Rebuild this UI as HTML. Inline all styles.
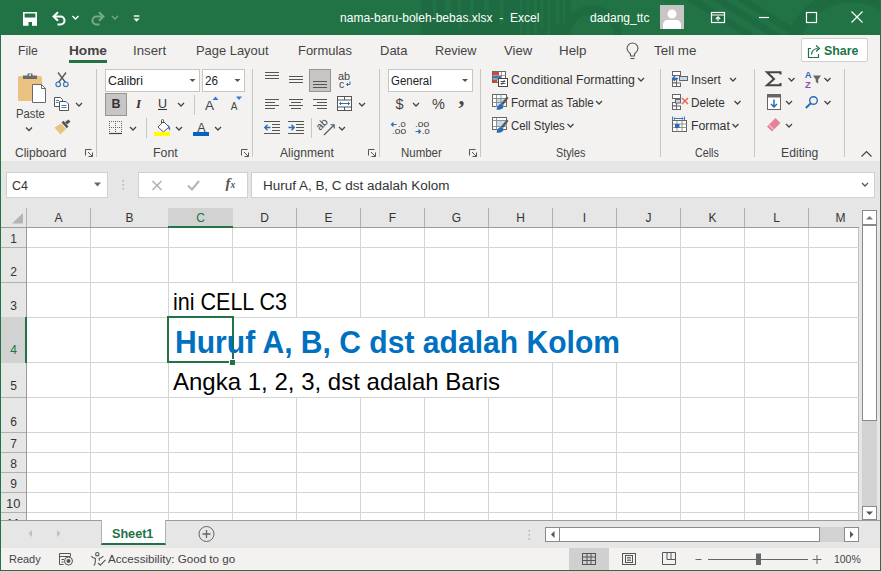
<!DOCTYPE html>
<html lang="id"><head><meta charset="utf-8"><title>nama-baru-boleh-bebas.xlsx - Excel</title>
<style>
html,body{margin:0;padding:0;}
body{width:881px;height:571px;overflow:hidden;position:relative;background:#f3f2f1;font-family:"Liberation Sans",sans-serif;}
div,span,svg{position:absolute;box-sizing:border-box;}
.t{white-space:pre;display:block;}
#texts{left:0;top:0;width:881px;height:571px;}
#title{left:0;top:0;width:881px;height:35px;background:#217346;overflow:hidden;}
#frame{left:0;top:0;width:881px;height:571px;border-left:1px solid #217346;border-right:1px solid #217346;border-bottom:1px solid #217346;z-index:5;pointer-events:none;}
#ribbon{left:1px;top:35px;width:879px;height:126px;background:#f3f2f1;}
.gsep{width:1px;top:69px;height:88px;background:#c8c6c4;}
.box{background:#fff;border:1px solid #c8c6c4;}
#fbar{left:1px;top:161px;width:879px;height:47px;background:#e6e6e6;}
#grid{left:1px;top:208px;width:858px;height:312px;background:#fff;overflow:hidden;}
.vl{width:1px;top:0;height:312px;background:#d4d4d4;}
.hl{height:1px;left:0;width:859px;background:#d4d4d4;}
#colhdr{left:0;top:0;width:859px;height:20px;background:#e6e6e6;border-bottom:1px solid #9b9b9b;}
#rowhdr{left:0;top:20px;width:26px;height:292px;background:#e6e6e6;border-right:1px solid #9b9b9b;}
.chl{width:1px;top:0;height:19px;background:#b1b1b1;}
.rhl{height:1px;left:0;width:25px;background:#b1b1b1;}
#sheetbar{left:1px;top:520px;width:879px;height:28px;background:#e6e6e6;border-top:1px solid #9b9b9b;}
#status{left:1px;top:548px;width:879px;height:22px;background:#f3f2f1;}
#vscroll{left:859px;top:208px;width:21px;height:312px;background:#e6e6e6;}
.btn{background:#c8c6c4;border:1px solid #979593;}
#rshadow{left:1px;top:161px;width:879px;height:5px;background:linear-gradient(#d0d0d0,#dedede 40%,#e6e6e6);}
.mk{display:inline-block;position:static;width:0;height:0;}

</style></head><body>
<div id="title">
  <svg width="881" height="35" viewBox="0 0 881 35" style="left:0;top:0">
    <rect x="421" y="0" width="150" height="35" fill="#1e6b41"/>
    <g fill="#217346">
      <rect x="433" y="0" width="3" height="18"/><rect x="445" y="0" width="6" height="12"/><rect x="458" y="0" width="3" height="28"/><rect x="470" y="0" width="4" height="20"/><rect x="484" y="0" width="5" height="10"/><rect x="500" y="0" width="3" height="24"/>
      <rect x="520" y="0" width="2" height="35"/><rect x="527" y="0" width="2" height="35"/><rect x="534" y="0" width="3" height="35"/><rect x="541" y="0" width="2" height="30"/><rect x="548" y="0" width="2" height="35"/><rect x="556" y="0" width="3" height="25"/><rect x="563" y="0" width="2" height="35"/>
    </g>
    <g fill="none" stroke="#1e6b41">
      <circle cx="592" cy="36" r="26" stroke-width="9"/>
      <circle cx="852" cy="58" r="62" stroke-width="13"/>
      <path d="M690 -2 L752 37 M716 -2 L778 37 M740 -2 L802 37" stroke-width="7"/>
    </g>
  </svg>
</div>
<div id="ribbon"></div>
<div id="rshadow"></div>
<div id="fbar"></div>
<div id="grid">
  <div class="vl" style="left:89px"></div>
<div class="vl" style="left:167px"></div>
<div class="vl" style="left:231px"></div>
<div class="vl" style="left:295px"></div>
<div class="vl" style="left:359px"></div>
<div class="vl" style="left:423px"></div>
<div class="vl" style="left:487px"></div>
<div class="vl" style="left:551px"></div>
<div class="vl" style="left:615px"></div>
<div class="vl" style="left:679px"></div>
<div class="vl" style="left:743px"></div>
<div class="vl" style="left:807px"></div>
<div class="vl" style="left:857px;background:#c0c0c0"></div>
<div class="hl" style="top:39px"></div>
<div class="hl" style="top:74px"></div>
<div class="hl" style="top:109px"></div>
<div class="hl" style="top:154px"></div>
<div class="hl" style="top:189px"></div>
<div class="hl" style="top:224px"></div>
<div class="hl" style="top:244px"></div>
<div class="hl" style="top:264px"></div>
<div class="hl" style="top:284px"></div>
<div class="hl" style="top:304px"></div>
<div style="left:231px;top:75px;width:1px;height:34px;background:#fff"></div>
<div style="left:231px;top:110px;width:1px;height:44px;background:#fff"></div>
<div style="left:295px;top:110px;width:1px;height:44px;background:#fff"></div>
<div style="left:359px;top:110px;width:1px;height:44px;background:#fff"></div>
<div style="left:423px;top:110px;width:1px;height:44px;background:#fff"></div>
<div style="left:487px;top:110px;width:1px;height:44px;background:#fff"></div>
<div style="left:551px;top:110px;width:1px;height:44px;background:#fff"></div>
<div style="left:615px;top:110px;width:1px;height:44px;background:#fff"></div>
<div style="left:231px;top:155px;width:1px;height:34px;background:#fff"></div>
<div style="left:295px;top:155px;width:1px;height:34px;background:#fff"></div>
<div style="left:359px;top:155px;width:1px;height:34px;background:#fff"></div>
<div style="left:423px;top:155px;width:1px;height:34px;background:#fff"></div>
<div style="left:487px;top:155px;width:1px;height:34px;background:#fff"></div>
<div id="colhdr"></div>
<div id="chsel" style="left:167px;top:0;width:65px;height:20px;background:#d2d2d2;border-bottom:2px solid #217346"></div>
<div class="chl" style="left:25px"></div>
<div class="chl" style="left:89px"></div>
<div class="chl" style="left:295px"></div>
<div class="chl" style="left:359px"></div>
<div class="chl" style="left:423px"></div>
<div class="chl" style="left:487px"></div>
<div class="chl" style="left:551px"></div>
<div class="chl" style="left:615px"></div>
<div class="chl" style="left:679px"></div>
<div class="chl" style="left:743px"></div>
<div class="chl" style="left:807px"></div>
<div id="rowhdr"></div>
<div id="rhsel" style="left:0;top:109px;width:26px;height:46px;background:#d2d2d2;border-right:2px solid #217346"></div>
<div class="rhl" style="top:39px"></div>
<div class="rhl" style="top:74px"></div>
<div class="rhl" style="top:189px"></div>
<div class="rhl" style="top:224px"></div>
<div class="rhl" style="top:244px"></div>
<div class="rhl" style="top:264px"></div>
<div class="rhl" style="top:284px"></div>
<div class="rhl" style="top:304px"></div>
<div id="sel" style="left:166px;top:108px;width:67px;height:47px;border:2px solid #217346"></div>
<div id="fill" style="left:228px;top:151px;width:5px;height:5px;background:#217346;border-left:1px solid #fff;border-top:1px solid #fff;box-sizing:content-box"></div>
</div>
<div id="vscroll"></div>
<div id="sheetbar"></div>
<div id="sheettab" style="left:101px;top:520px;width:65px;height:25px;background:#fff;border-bottom:2px solid #217346;border-left:1px solid #b0b0b0;border-right:1px solid #b0b0b0"></div>
<div id="hstrack" style="left:820px;top:527px;width:25px;height:15px;background:#d2d2d2"></div>
<div id="status"></div>
<!--BOXES-->
<div class="box" style="left:105px;top:69px;width:95px;height:23px"></div>
<div class="box" style="left:202px;top:69px;width:43px;height:23px"></div>
<div class="box" style="left:388px;top:69px;width:85px;height:23px"></div>
<div class="box" style="left:6px;top:172px;width:102px;height:26px;border-color:#d0d0d0"></div>
<div class="box" style="left:138px;top:172px;width:110px;height:26px;border-color:#d0d0d0"></div>
<div class="box" style="left:251px;top:172px;width:624px;height:26px;border-color:#d0d0d0"></div>
<div class="btn" style="left:105px;top:93px;width:22px;height:23px"></div>
<div class="btn" style="left:309px;top:69px;width:22px;height:23px"></div>
<div class="box" style="left:801px;top:38px;width:67px;height:24px;border-color:#d2d0ce;border-radius:2px"></div>
<div id="hometab" style="left:69px;top:60px;width:38px;height:3px;background:#217346"></div>
<div class="gsep" style="left:96px"></div>
<div class="gsep" style="left:252px"></div>
<div class="gsep" style="left:379px"></div>
<div class="gsep" style="left:480px"></div>
<div class="gsep" style="left:660px"></div>
<div class="gsep" style="left:754px"></div>
<div class="gsep" style="left:844px"></div>
<svg id="icons" width="881" height="571" viewBox="0 0 881 571" style="left:0;top:0" fill="none">
<!-- ===== title bar ===== -->
<g stroke="#fff" fill="none">
  <path d="M23.800 25 V12.700 H36.200 V25" stroke-width="1.600"/>
  <path d="M23 17.500 H37 V25.800 H32 V22 H28.500 V25.800 H23Z" fill="#fff" stroke="none"/>
  <path d="M54 16.500 H60.500 A4 4 0 0 1 60.500 24.500 H57.500" stroke-width="2.100"/>
  <path d="M58 12.200 L53.600 16.500 L58 20.800" stroke-width="2.100"/>
  <path d="M72.500 16 L75.500 19 L78.500 16" stroke-width="1.400"/>
  <g opacity=".38">
  <path d="M103 16.500 H96.500 A4 4 0 0 0 96.500 24.500 H99.500" stroke-width="2.100"/>
  <path d="M99 12.200 L103.400 16.500 L99 20.800" stroke-width="2.100"/>
  <path d="M112 16 L115 19 L118 16" stroke-width="1.400"/>
  </g>
  <path d="M133.800 16 H139.400" stroke-width="1.400"/>
</g>
<path d="M133.500 18.500 H139.700 L136.600 21.700Z" fill="#fff"/>
<!-- avatar -->
<rect x="660" y="5" width="24" height="24" fill="#c8c6c4"/>
<circle cx="672" cy="14" r="4.5" fill="#fff"/>
<path d="M663 29 V25 Q663 20 668 20 H676 Q681 20 681 25 V29Z" fill="#fff"/>
<!-- ribbon display -->
<g stroke="#fff" stroke-width="1.200" fill="none">
<rect x="711.500" y="12.500" width="13" height="10"/>
<path d="M711.500 15 H724.500 M718 21 V17 M715.800 19 L718 16.800 L720.200 19"/>
<path d="M759 17.500 H769"/>
<rect x="806.500" y="12.500" width="10" height="10"/>
<path d="M851.500 11.500 L862.500 22.500 M862.500 11.500 L851.500 22.500"/>
</g>
<!-- ===== tab row ===== -->
<g stroke="#555" stroke-width="1.100" fill="none">
<path d="M630.500 56 V54 C628 52 627 50.500 627 48.500 A5.500 5.500 0 0 1 638 48.500 C638 50.500 637 52 634.500 54 V56 Z"/>
<path d="M630.500 58.500 H634.500"/>
</g>
<g stroke="#217346" stroke-width="1.200" fill="none">
<path d="M811 48.500 H808.500 V57.500 H818.500 V54"/>
<path d="M811.500 54.500 C812 50 815 48.500 818 48.500 M816 45.500 L819.500 48.500 L816 51.500"/>
</g>

<!-- ===== clipboard group ===== -->
<rect x="18" y="76" width="24" height="25" rx="1.500" fill="#eac282"/>
<path d="M23 79 V75.500 H27.500 V73.500 H32.500 V75.500 H37 V79Z" fill="#6a6a6a"/>
<rect x="29" y="74.300" width="2" height="1.500" fill="#f3f2f1"/>
<path d="M32.500 84.500 H41.500 L45.500 88.500 V102.500 H32.500Z" fill="#fff" stroke="#6a6a6a" stroke-width="1"/>
<path d="M41.500 84.500 V88.500 H45.500" stroke="#6a6a6a" stroke-width="1"/>
<path d="M-3 -1.500 L0 1.500 L3 -1.500" stroke="#444" stroke-width="1.300" fill="none" transform="translate(29 129)"/>
<!-- scissors -->
<g stroke="#555" stroke-width="1.300"><path d="M58 72.500 L65.500 82.500 M66 72.500 L58.500 82.500"/></g>
<circle cx="58.200" cy="84.300" r="2.300" stroke="#3a78c0" stroke-width="1.200"/>
<circle cx="65.800" cy="84.300" r="2.300" stroke="#3a78c0" stroke-width="1.200"/>
<!-- copy -->
<g stroke="#555" stroke-width="1" fill="#fff">
<path d="M54.500 97.500 H60.500 L62.500 99.500 V106.500 H54.500Z"/>
<path d="M59.500 101.500 H66 L68.500 104 V110.500 H59.500Z"/>
</g>
<path d="M56 100.500 H59 M56 102.500 H58.500 M61.500 105.500 H66.500 M61.500 107.500 H66.500" stroke="#3a78c0" stroke-width="1"/>
<path d="M-3 -1.500 L0 1.500 L3 -1.500" stroke="#444" stroke-width="1.300" fill="none" transform="translate(79 104.500)"/>
<!-- format painter -->
<path d="M54.500 127.500 L61 123.500 L66 129 L60.500 134.500Z" fill="#eac282"/>
<path d="M61.500 122.500 L63.500 120.800 L68.500 126.500 L66.700 128.200Z" fill="#555"/>
<path d="M65 122 L68.500 119.500 L70.500 121.800 L67 124.500Z" fill="#555"/>
<path d="M0.500 6.500 V0.500 H6.500 M3 3 L7.500 7.500 M7.500 3.500 V7.500 H3.500" stroke="#555" stroke-width="1" fill="none" transform="translate(85 149)"/>
<!-- ===== font group ===== -->
<path d="M-3 -1.500 H3 L0 1.500Z" fill="#555" transform="translate(192.500 80.500)"/>
<path d="M-3 -1.500 H3 L0 1.500Z" fill="#555" transform="translate(237.500 80.500)"/>
<path d="M-3 -1.500 L0 1.500 L3 -1.500" stroke="#444" stroke-width="1.300" fill="none" transform="translate(181 104.500)"/>
<path d="M194.500 95 V115 M146.500 118 V138" stroke="#c8c6c4"/>
<path d="M212.500 100 L215.500 96.500 L218.500 100Z" fill="#2b7cd3"/>
<path d="M236 96.500 H242 L239 100Z" fill="#2b7cd3"/>
<!-- borders -->
<g stroke="#666" stroke-width="1" stroke-dasharray="1 1">
<path d="M109 121.500 H122 M109 127.500 H122 M109.500 121 V133 M115.500 121 V133 M121.500 121 V133"/>
</g>
<path d="M109 133.500 H122" stroke="#444" stroke-width="1.200"/>
<path d="M-3 -1.500 L0 1.500 L3 -1.500" stroke="#444" stroke-width="1.300" fill="none" transform="translate(133 128.500)"/>
<!-- fill colour -->
<path d="M158 127 L163.500 121.500 L169 127 L163.500 132 Z" fill="#fff" stroke="#555" stroke-width="1"/>
<path d="M161.500 124 V120.500 Q161.500 119.500 162.500 119.500 Q163.500 119.500 163.500 120.500 V123" stroke="#555" stroke-width="1"/>
<path d="M168 125 Q171 126.500 170 130.500 Q167.500 129 168 125Z" fill="#3a78c0"/>
<rect x="154" y="132" width="16" height="4" fill="#ffff00"/>
<path d="M-3 -1.500 L0 1.500 L3 -1.500" stroke="#444" stroke-width="1.300" fill="none" transform="translate(179 128.500)"/>
<rect x="193" y="132" width="16" height="4" fill="#0563c1"/>
<path d="M-3 -1.500 L0 1.500 L3 -1.500" stroke="#444" stroke-width="1.300" fill="none" transform="translate(218 128.500)"/>
<path d="M0.500 6.500 V0.500 H6.500 M3 3 L7.500 7.500 M7.500 3.500 V7.500 H3.500" stroke="#555" stroke-width="1" fill="none" transform="translate(241 149)"/>
<!-- ===== alignment ===== -->
<g stroke="#555" stroke-width="1.100">
<path d="M265 72.500 H279 M265 75.500 H279 M265 78.500 H279"/>
<path d="M289 76.500 H303 M289 79.500 H303 M289 82.500 H303"/>
<path d="M313 81.500 H327 M313 84.500 H327 M313 87.500 H327"/>
<path d="M265 99.500 H279 M265 102.500 H275 M265 105.500 H279 M265 108.500 H275"/>
<path d="M289 99.500 H303 M291 102.500 H301 M289 105.500 H303 M291 108.500 H301"/>
<path d="M313 99.500 H327 M317 102.500 H327 M313 105.500 H327 M317 108.500 H327"/>
<path d="M264 121.500 H280 M272 124.500 H280 M272 127.500 H280 M272 130.500 H280 M264 133.500 H280"/>
<path d="M288 121.500 H304 M296 124.500 H304 M296 127.500 H304 M296 130.500 H304 M288 133.500 H304"/>
</g>
<g stroke="#2b6cb5" stroke-width="1.400">
<path d="M265 127.500 H270.500 M267.500 124.800 L264.800 127.500 L267.500 130.200"/>
<path d="M288.500 127.500 H294 M291.500 124.800 L294.200 127.500 L291.500 130.200"/>
</g>
<!-- merge -->
<g stroke="#555" stroke-width="1">
<rect x="337.500" y="96.500" width="14" height="14" fill="#fff"/>
<path d="M337.500 100 H351.500 M337.500 107 H351.500 M344.500 96.500 V100 M344.500 107 V110.500"/>
</g>
<path d="M339.500 103.500 H349.500 M341 102 L339.500 103.500 L341 105 M348 102 L349.500 103.500 L348 105" stroke="#2b6cb5" stroke-width="1"/>
<path d="M-3 -1.500 L0 1.500 L3 -1.500" stroke="#444" stroke-width="1.300" fill="none" transform="translate(362 104.500)"/>
<path d="M311.500 118 V138" stroke="#c8c6c4"/>
<path d="M324 135 L334 125 M330.500 124.800 H334.200 V128.500" stroke="#555" stroke-width="1.100"/>
<path d="M-3 -1.500 L0 1.500 L3 -1.500" stroke="#444" stroke-width="1.300" fill="none" transform="translate(342 128.500)"/>
<path d="M346.500 84.500 H350 V81.500 M348 83 L346.500 84.500 L348 86" stroke="#2b6cb5" stroke-width="1"/>
<path d="M0.500 6.500 V0.500 H6.500 M3 3 L7.500 7.500 M7.500 3.500 V7.500 H3.500" stroke="#555" stroke-width="1" fill="none" transform="translate(368 149)"/>
<!-- ===== number ===== -->
<path d="M-3 -1.500 H3 L0 1.500Z" fill="#555" transform="translate(465 80.500)"/>
<path d="M-3 -1.500 L0 1.500 L3 -1.500" stroke="#444" stroke-width="1.300" fill="none" transform="translate(416 104.500)"/>
<g stroke="#2b6cb5" stroke-width="1.200">
<path d="M391.500 124.500 H396.500 M393.500 122.500 L391.500 124.500 L393.500 126.500"/>
<path d="M415.500 131.500 H420.500 M418.500 129.500 L420.500 131.500 L418.500 133.500"/>
</g>
<path d="M0.500 6.500 V0.500 H6.500 M3 3 L7.500 7.500 M7.500 3.500 V7.500 H3.500" stroke="#555" stroke-width="1" fill="none" transform="translate(469 149)"/>
<!-- ===== styles ===== -->
<g>
<rect x="492.500" y="71.500" width="13" height="11" fill="#fff" stroke="#666"/>
<path d="M497 71.500 V82.500 M501.500 71.500 V82.500 M492.500 75.500 H505.500 M492.500 79 H505.500" stroke="#888" stroke-width=".8"/>
<rect x="493" y="72" width="6" height="3" fill="#d9482b"/>
<rect x="493" y="76" width="8" height="2.500" fill="#3a78c0"/>
<rect x="493" y="79.500" width="4" height="3" fill="#d9482b"/>
<rect x="498.500" y="78.500" width="9" height="8" fill="#fff" stroke="#444"/>
<path d="M500.500 81.500 H505.500 M500.500 83.500 H505.500 M504.500 80 L501.500 85" stroke="#444" stroke-width=".9"/>
</g>
<g id="fat">
<rect x="492.500" y="94.500" width="14" height="12" fill="#fff" stroke="#666"/>
<rect x="496.500" y="98.500" width="8" height="8" fill="#c5d9f1"/>
<path d="M496.500 94.500 V106.500 M501 94.500 V106.500 M492.500 98.500 H506.500 M492.500 102.500 H506.500" stroke="#888" stroke-width=".9"/>
<path d="M501 103.500 L507 96.500 L508.500 98 L503 105Z" fill="#555"/>
<path d="M496.500 109.500 Q497.500 104 501.500 104 Q504.500 105.500 503 108 Q501 110.500 496.500 109.500Z" fill="#2b6cb5"/>
</g>
<g id="cs">
<rect x="492.500" y="117.500" width="14" height="12" fill="#fff" stroke="#666"/>
<rect x="496.500" y="120.500" width="10" height="6" fill="#c5d9f1"/>
<path d="M496.500 117.500 V129.500 M492.500 120.500 H506.500 M492.500 126.500 H506.500" stroke="#888" stroke-width=".9"/>
<path d="M501 126.500 L507 119.500 L508.500 121 L503 128Z" fill="#555"/>
<path d="M496.500 132.500 Q497.500 127 501.500 127 Q504.500 128.500 503 131 Q501 133.500 496.500 132.500Z" fill="#2b6cb5"/>
</g>
<path d="M-3 -1.500 L0 1.500 L3 -1.500" stroke="#444" stroke-width="1.300" fill="none" transform="translate(641 79.500)"/>
<path d="M-3 -1.500 L0 1.500 L3 -1.500" stroke="#444" stroke-width="1.300" fill="none" transform="translate(599 102.500)"/>
<path d="M-3 -1.500 L0 1.500 L3 -1.500" stroke="#444" stroke-width="1.300" fill="none" transform="translate(570.500 125.500)"/>
<!-- ===== cells ===== -->
<g stroke="#666" stroke-width="1" fill="#fff">
<rect x="672.500" y="71.500" width="8" height="4"/>
<rect x="672.500" y="79.500" width="4" height="3.500"/>
<rect x="672.500" y="83" width="4" height="3.500"/><rect x="676.500" y="83" width="4" height="3.500"/>
<rect x="679.500" y="76.500" width="8" height="4" fill="#c5d9f1"/>
<rect x="672.500" y="94.500" width="8" height="4"/>
<rect x="672.500" y="102.500" width="4" height="3.500"/>
<rect x="672.500" y="106" width="4" height="3.500"/><rect x="676.500" y="106" width="4" height="3.500"/>
<rect x="675.500" y="99.500" width="5" height="3.500" fill="#c5d9f1"/>
<rect x="672.500" y="120.500" width="14" height="11"/>
</g>
<path d="M672.500 78.500 H678 M675 76 L672.500 78.500 L675 81" stroke="#2b6cb5" stroke-width="1.400"/>
<path d="M682 98 L688 104 M688 98 L682 104" stroke="#e8604c" stroke-width="1.400"/>
<path d="M672.500 124 H686.500 M672.500 127.500 H686.500 M677 120.500 V131.500 M682 120.500 V131.500" stroke="#888" stroke-width=".9"/>
<rect x="675" y="124" width="4.500" height="4" fill="#2b6cb5"/>
<path d="M672.500 116.500 V120 M684.500 116.500 V120 M674 118.500 H683 M675 117.300 L673.800 118.500 L675 119.700 M682 117.300 L683.200 118.500 L682 119.700" stroke="#2b6cb5" stroke-width=".9"/>
<path d="M-3 -1.500 L0 1.500 L3 -1.500" stroke="#444" stroke-width="1.300" fill="none" transform="translate(733 79.500)"/>
<path d="M-3 -1.500 L0 1.500 L3 -1.500" stroke="#444" stroke-width="1.300" fill="none" transform="translate(737.500 102.500)"/>
<path d="M-3 -1.500 L0 1.500 L3 -1.500" stroke="#444" stroke-width="1.300" fill="none" transform="translate(735.500 125.500)"/>
<!-- ===== editing ===== -->
<path d="M780.500 74.500 V72.200 H767 L774 79 L767 85.300 H780.500 V83" stroke="#444" stroke-width="2" stroke-linejoin="miter"/>
<path d="M-3 -1.500 L0 1.500 L3 -1.500" stroke="#444" stroke-width="1.300" fill="none" transform="translate(791.500 79.500)"/>
<path d="M-3 -1.500 L0 1.500 L3 -1.500" stroke="#444" stroke-width="1.300" fill="none" transform="translate(827.500 79.500)"/>
<path d="M813 75.500 H821 L818.200 79.500 V83.500 L815.800 82 V79.500Z" fill="#666"/>
<rect x="767.500" y="94.500" width="13" height="15" fill="#fff" stroke="#666"/>
<rect x="767" y="94" width="14" height="3.500" fill="#666"/>
<path d="M774 99.500 V106.500 M771 104 L774 107 L777 104" stroke="#2b6cb5" stroke-width="1.500"/>
<path d="M-3 -1.500 L0 1.500 L3 -1.500" stroke="#444" stroke-width="1.300" fill="none" transform="translate(789 102.500)"/>
<circle cx="813.500" cy="100.500" r="3.800" stroke="#2b6cb5" stroke-width="1.400"/>
<path d="M810.800 103.300 L805.800 108" stroke="#2b6cb5" stroke-width="1.900"/>
<path d="M-3 -1.500 L0 1.500 L3 -1.500" stroke="#444" stroke-width="1.300" fill="none" transform="translate(827.500 102.500)"/>
<path d="M767 126.500 L775.500 118 L780.500 123 L772 131.500 Z" fill="#e8829a"/>
<path d="M769 124.800 L773.800 129.600" stroke="#f3f2f1" stroke-width="1"/>
<path d="M-3 -1.500 L0 1.500 L3 -1.500" stroke="#444" stroke-width="1.300" fill="none" transform="translate(789 125.500)"/>
<path d="M861.500 156.500 L866.500 151.500 L871.500 156.500" stroke="#444" stroke-width="1.200"/>

<!-- ===== formula bar ===== -->
<g fill="#b0b0b0"><rect x="122.500" y="180" width="1.500" height="1.500"/><rect x="122.500" y="184" width="1.500" height="1.500"/><rect x="122.500" y="188" width="1.500" height="1.500"/></g>
<path d="M94 182.500 H101 L97.500 186.500Z" fill="#666"/>
<path d="M152.500 181 L161.500 190 M161.500 181 L152.500 190" stroke="#b4b4b4" stroke-width="1.700"/>
<path d="M188 185.500 L192 189.500 L199 181" stroke="#b4b4b4" stroke-width="2"/>
<path d="M862 183 L865 186 L868 183" stroke="#555" stroke-width="1.300"/>
<!-- select-all triangle -->
<path d="M23 213 V223.500 H12Z" fill="#b4b4b4"/>
<!-- ===== vertical scrollbar ===== -->
<rect x="862.500" y="210.500" width="14" height="14" fill="#fff" stroke="#8a8a8a"/>
<path d="M866 219.500 H873 L869.500 216Z" fill="#777"/>
<rect x="862" y="421" width="15" height="86" fill="#d2d2d2"/>
<rect x="862.500" y="225.500" width="14" height="195" fill="#fff" stroke="#8a8a8a"/>
<rect x="862.500" y="506.500" width="14" height="13" fill="#fff" stroke="#8a8a8a"/>
<path d="M866 511.500 H873 L869.500 515Z" fill="#555"/>
<!-- ===== sheet bar ===== -->
<path d="M32 530 V537 L28.500 533.500Z M57 530 V537 L60.500 533.500Z" fill="#c0c0c0"/>
<circle cx="206.500" cy="534" r="7.500" stroke="#666" stroke-width="1" fill="none"/>
<path d="M202.500 534 H210.500 M206.500 530 V538" stroke="#666" stroke-width="1.300"/>
<g fill="#b0b0b0"><rect x="528.500" y="530" width="1.500" height="1.500"/><rect x="528.500" y="534" width="1.500" height="1.500"/><rect x="528.500" y="538" width="1.500" height="1.500"/></g>
<rect x="545.500" y="527.500" width="14" height="14" fill="#fff" stroke="#8a8a8a"/>
<path d="M554.500 531 V538 L551 534.500Z" fill="#555"/>
<rect x="559.500" y="527.500" width="260" height="14" fill="#fff" stroke="#8a8a8a"/>
<rect x="844.500" y="527.500" width="14" height="14" fill="#fff" stroke="#8a8a8a"/>
<path d="M850 531 V538 L853.500 534.500Z" fill="#555"/>
<!-- ===== status bar ===== -->
<g stroke="#555" stroke-width="1" fill="none">
<path d="M70.500 556 V553.500 H59.500 V564.500 H63.500 M59.500 556.500 H70.500 M61.500 559.500 H64 M61.500 562 H63.500"/>
<circle cx="68.500" cy="561" r="4"/>
</g>
<circle cx="68.500" cy="561" r="2" fill="#555"/>
<g stroke="#555" stroke-width="1.100" fill="none">
<circle cx="97.300" cy="554.200" r="1.700"/>
<path d="M91.300 556 C92.500 558 94.300 558.300 95.300 558.300 V562 C95.300 563.500 94.800 564.600 93.800 565.500 M103.300 556 C102 558 100.300 558.300 99.300 558.300 V560.800"/>
<path d="M98.200 563 L100.300 565.200 L105.500 559.800"/>
</g>
<rect x="569" y="548" width="40" height="22" fill="#d0d0d0"/>
<g stroke="#555" stroke-width="1" fill="none">
<rect x="582.500" y="553.500" width="13" height="11"/>
<path d="M582.500 557 H595.500 M582.500 560.500 H595.500 M587 553.500 V564.500 M591 553.500 V564.500"/>
<rect x="622.500" y="553.500" width="13" height="11"/>
<rect x="625.500" y="555.500" width="7" height="7"/>
<path d="M627 557.500 H631 M627 559 H631 M627 560.500 H631" stroke-width=".8"/>
<path d="M662.500 552.500 H675.500 V564.500 H662.500Z M667 552.500 V559.500 H675.500 M671 552.500 V559.500"/>
</g>
<path d="M695.500 559.500 H701.500 M708 559.500 H808 M812.500 559.500 H821.500 M817 555 V564" stroke="#666" stroke-width="1"/>
<rect x="756" y="553.500" width="5" height="11.500" fill="#666"/>
</svg>

<div id="frame"></div>

<div id="texts">
<span class="t" id="t0" style="left:340.48px;top:6.01px;font-size:12px;line-height:24px;height:24px;color:#fff;transform:scaleX(1.0028);transform-origin:0 0;">nama-baru-boleh-bebas.xlsx&nbsp; -&nbsp; Excel</span>
<span class="t" id="t1" style="left:589.75px;top:6.01px;font-size:12.5px;line-height:25.0px;height:25.0px;color:#fff;transform:scaleX(0.9599);transform-origin:0 0;">dadang_ttc</span>
<span class="t" id="t2" style="left:17.59px;top:37.01px;font-size:13.5px;line-height:27.0px;height:27.0px;color:#444;transform:scaleX(0.9042);transform-origin:0 0;">File</span>
<span class="t" id="t3" style="left:68.69px;top:37.01px;font-size:13.5px;line-height:27.0px;height:27.0px;color:#444;font-weight:700;transform:scaleX(1.0124);transform-origin:0 0;">Home</span>
<span class="t" id="t4" style="left:133.39px;top:37.01px;font-size:13.5px;line-height:27.0px;height:27.0px;color:#444;transform:scaleX(0.9800);transform-origin:0 0;">Insert</span>
<span class="t" id="t5" style="left:196.29px;top:37.01px;font-size:13.5px;line-height:27.0px;height:27.0px;color:#444;transform:scaleX(0.9560);transform-origin:0 0;">Page Layout</span>
<span class="t" id="t6" style="left:297.69px;top:37.01px;font-size:13.5px;line-height:27.0px;height:27.0px;color:#444;transform:scaleX(0.9594);transform-origin:0 0;">Formulas</span>
<span class="t" id="t7" style="left:379.59px;top:37.01px;font-size:13.5px;line-height:27.0px;height:27.0px;color:#444;transform:scaleX(0.9632);transform-origin:0 0;">Data</span>
<span class="t" id="t8" style="left:435.49px;top:37.01px;font-size:13.5px;line-height:27.0px;height:27.0px;color:#444;transform:scaleX(0.9371);transform-origin:0 0;">Review</span>
<span class="t" id="t9" style="left:503.59px;top:37.01px;font-size:13.5px;line-height:27.0px;height:27.0px;color:#444;transform:scaleX(0.9707);transform-origin:0 0;">View</span>
<span class="t" id="t10" style="left:558.69px;top:37.01px;font-size:13.5px;line-height:27.0px;height:27.0px;color:#444;transform:scaleX(0.9897);transform-origin:0 0;">Help</span>
<span class="t" id="t11" style="left:653.79px;top:37.01px;font-size:13.5px;line-height:27.0px;height:27.0px;color:#444;transform:scaleX(0.9933);transform-origin:0 0;">Tell me</span>
<span class="t" id="t12" style="left:823.69px;top:37.01px;font-size:13.5px;line-height:27.0px;height:27.0px;color:#217346;font-weight:700;transform:scaleX(0.9187);transform-origin:0 0;">Share</span>
<span class="t" id="t13" style="left:15.58px;top:102.01px;font-size:12px;line-height:24px;height:24px;color:#444;transform:scaleX(0.9391);transform-origin:0 0;">Paste</span>
<span class="t" id="t14" style="left:14.58px;top:141.01px;font-size:12px;line-height:24px;height:24px;color:#444;transform:scaleX(0.9989);transform-origin:0 0;">Clipboard</span>
<span class="t" id="t15" style="left:107.68px;top:69.01px;font-size:12px;line-height:24px;height:24px;color:#222;transform:scaleX(1.0266);transform-origin:0 0;">Calibri</span>
<span class="t" id="t16" style="left:204.68px;top:69.01px;font-size:12px;line-height:24px;height:24px;color:#222;transform:scaleX(0.9746);transform-origin:0 0;">26</span>
<span class="t" id="t17" style="left:111.5px;top:92.01px;font-size:12.5px;line-height:25.0px;height:25.0px;color:#333;font-weight:700;margin-left:-0.02px;">B</span>
<span class="t" id="t18" style="left:136px;top:91.00px;font-size:13px;line-height:26px;height:26px;color:#333;font-weight:700;font-style:italic;margin-left:-0.03px;font-family:'Liberation Serif',serif;">I</span>
<span class="t" id="t19" style="left:158px;top:92.01px;font-size:12.5px;line-height:25.0px;height:25.0px;color:#333;margin-left:-0.02px;text-decoration:underline;">U</span>
<span class="t" id="t20" style="left:205px;top:92.01px;font-size:13.5px;line-height:27.0px;height:27.0px;color:#444;margin-left:-0.01px;">A</span>
<span class="t" id="t21" style="left:230.5px;top:97.02px;font-size:10px;line-height:20px;height:20px;color:#444;margin-left:0.16px;">A</span>
<span class="t" id="t22" style="left:196px;top:116.01px;font-size:12.5px;line-height:25.0px;height:25.0px;color:#444;margin-left:1.33px;">A</span>
<span class="t" id="t23" style="left:153.48px;top:141.01px;font-size:12px;line-height:24px;height:24px;color:#444;transform:scaleX(1.0335);transform-origin:0 0;">Font</span>
<span class="t" id="t24" style="left:280.48px;top:141.01px;font-size:12px;line-height:24px;height:24px;color:#444;transform:scaleX(1.0083);transform-origin:0 0;">Alignment</span>
<span class="t" id="t25" style="left:390.68px;top:69.01px;font-size:12px;line-height:24px;height:24px;color:#222;transform:scaleX(0.9536);transform-origin:0 0;">General</span>
<span class="t" id="t26" style="left:395.5px;top:90.01px;font-size:14.5px;line-height:29.0px;height:29.0px;color:#444;margin-left:-0.04px;">$</span>
<span class="t" id="t27" style="left:432px;top:90.01px;font-size:14.5px;line-height:29.0px;height:29.0px;color:#444;margin-left:0.05px;">%</span>
<span class="t" id="t28" style="left:459px;top:72.01px;font-size:24px;line-height:48px;height:48px;color:#444;font-weight:700;margin-left:-0.50px;font-family:'Liberation Serif',serif;">,</span>
<span class="t" id="t29" style="left:401.08px;top:141.01px;font-size:12px;line-height:24px;height:24px;color:#444;transform:scaleX(0.9563);transform-origin:0 0;">Number</span>
<span class="t" id="t30" style="left:510.98px;top:68.01px;font-size:12px;line-height:24px;height:24px;color:#333;transform:scaleX(1.0256);transform-origin:0 0;">Conditional Formatting</span>
<span class="t" id="t31" style="left:510.98px;top:91.01px;font-size:12px;line-height:24px;height:24px;color:#333;transform:scaleX(0.9650);transform-origin:0 0;">Format as Table</span>
<span class="t" id="t32" style="left:510.98px;top:114.01px;font-size:12px;line-height:24px;height:24px;color:#333;transform:scaleX(0.9494);transform-origin:0 0;">Cell Styles</span>
<span class="t" id="t33" style="left:555.58px;top:141.01px;font-size:12px;line-height:24px;height:24px;color:#444;transform:scaleX(0.8970);transform-origin:0 0;">Styles</span>
<span class="t" id="t34" style="left:690.78px;top:68.01px;font-size:12px;line-height:24px;height:24px;color:#333;transform:scaleX(0.9935);transform-origin:0 0;">Insert</span>
<span class="t" id="t35" style="left:690.78px;top:91.01px;font-size:12px;line-height:24px;height:24px;color:#333;transform:scaleX(0.9750);transform-origin:0 0;">Delete</span>
<span class="t" id="t36" style="left:690.78px;top:114.01px;font-size:12px;line-height:24px;height:24px;color:#333;transform:scaleX(1.0212);transform-origin:0 0;">Format</span>
<span class="t" id="t37" style="left:694.88px;top:141.01px;font-size:12px;line-height:24px;height:24px;color:#444;transform:scaleX(0.8931);transform-origin:0 0;">Cells</span>
<span class="t" id="t38" style="left:780.98px;top:141.01px;font-size:12px;line-height:24px;height:24px;color:#444;transform:scaleX(1.0168);transform-origin:0 0;">Editing</span>
<span class="t" id="t39" style="left:338.37px;top:66.00px;font-size:10.5px;line-height:21.0px;height:21.0px;color:#444;transform:scaleX(1.0396);transform-origin:0 0;">ab</span>
<span class="t" id="t40" style="left:339px;top:74.00px;font-size:10.5px;line-height:21.0px;height:21.0px;color:#444;margin-left:0.12px;">c</span>
<span class="t" id="t41" style="left:320.37px;top:117.00px;font-size:10.5px;line-height:21.0px;height:21.0px;color:#444;transform:rotate(-45deg) scaleX(1.0396);transform-origin:0 14.14px;">ab</span>
<span class="t" id="t42" style="left:398.05px;top:117.01px;font-size:7.5px;line-height:15.0px;height:15.0px;color:#333;transform:scaleX(1.2497);transform-origin:0 0;">.0</span>
<span class="t" id="t43" style="left:391.55px;top:124.01px;font-size:7.5px;line-height:15.0px;height:15.0px;color:#333;transform:scaleX(1.3720);transform-origin:0 0;">.00</span>
<span class="t" id="t44" style="left:415.05px;top:117.01px;font-size:7.5px;line-height:15.0px;height:15.0px;color:#333;transform:scaleX(1.3720);transform-origin:0 0;">.00</span>
<span class="t" id="t45" style="left:422.05px;top:124.01px;font-size:7.5px;line-height:15.0px;height:15.0px;color:#333;transform:scaleX(1.2497);transform-origin:0 0;">.0</span>
<span class="t" id="t46" style="left:805px;top:65.01px;font-size:9.5px;line-height:19.0px;height:19.0px;color:#2b6cb5;font-weight:700;margin-left:-0.19px;">A</span>
<span class="t" id="t47" style="left:805px;top:75.01px;font-size:9.5px;line-height:19.0px;height:19.0px;color:#8a4fa8;font-weight:700;margin-left:0.09px;">Z</span>
<span class="t" id="t48" style="left:12.25px;top:174.01px;font-size:12.5px;line-height:25.0px;height:25.0px;color:#333;transform:scaleX(0.9935);transform-origin:0 0;">C4</span>
<span class="t" id="t49" style="left:262.75px;top:174.01px;font-size:12.5px;line-height:25.0px;height:25.0px;color:#333;transform:scaleX(1.0772);transform-origin:0 0;">Huruf A, B, C dst adalah Kolom</span>
<span class="t" id="t50" style="left:224px;top:168.01px;font-size:15px;line-height:30px;height:30px;color:#555;font-weight:700;font-style:italic;margin-left:1.50px;font-family:'Liberation Serif',serif;">f</span>
<span class="t" id="t51" style="left:230.5px;top:176.01px;font-size:9.5px;line-height:19.0px;height:19.0px;color:#555;font-weight:700;font-style:italic;margin-left:0.12px;font-family:'Liberation Serif',serif;">x</span>
<span class="t" id="t52" style="left:54.0px;top:206.01px;font-size:12px;line-height:24px;height:24px;color:#333;margin-left:0.49px;">A</span>
<span class="t" id="t53" style="left:126.0px;top:206.01px;font-size:12px;line-height:24px;height:24px;color:#333;margin-left:-0.51px;">B</span>
<span class="t" id="t54" style="left:196.5px;top:206.01px;font-size:12px;line-height:24px;height:24px;color:#217346;margin-left:-0.34px;">C</span>
<span class="t" id="t55" style="left:260.0px;top:206.01px;font-size:12px;line-height:24px;height:24px;color:#333;margin-left:0.16px;">D</span>
<span class="t" id="t56" style="left:325.5px;top:206.01px;font-size:12px;line-height:24px;height:24px;color:#333;margin-left:-1.01px;">E</span>
<span class="t" id="t57" style="left:389.5px;top:206.01px;font-size:12px;line-height:24px;height:24px;color:#333;margin-left:-0.67px;">F</span>
<span class="t" id="t58" style="left:452.0px;top:206.01px;font-size:12px;line-height:24px;height:24px;color:#333;margin-left:-0.17px;">G</span>
<span class="t" id="t59" style="left:516.0px;top:206.01px;font-size:12px;line-height:24px;height:24px;color:#333;margin-left:0.16px;">H</span>
<span class="t" id="t60" style="left:583.5px;top:206.01px;font-size:12px;line-height:24px;height:24px;color:#333;margin-left:-0.67px;">I</span>
<span class="t" id="t61" style="left:646.5px;top:206.01px;font-size:12px;line-height:24px;height:24px;color:#333;margin-left:-1.00px;">J</span>
<span class="t" id="t62" style="left:708.5px;top:206.01px;font-size:12px;line-height:24px;height:24px;color:#333;margin-left:-0.01px;">K</span>
<span class="t" id="t63" style="left:774.0px;top:206.01px;font-size:12px;line-height:24px;height:24px;color:#333;margin-left:-0.84px;">L</span>
<span class="t" id="t64" style="left:834.5px;top:206.01px;font-size:12px;line-height:24px;height:24px;color:#333;margin-left:1.00px;">M</span>
<span class="t" id="t65" style="left:10.5px;top:227.01px;font-size:12px;line-height:24px;height:24px;color:#333;margin-left:-0.34px;z-index:1;">1</span>
<span class="t" id="t66" style="left:10.5px;top:260.01px;font-size:12px;line-height:24px;height:24px;color:#333;margin-left:-0.34px;z-index:1;">2</span>
<span class="t" id="t67" style="left:10.5px;top:294.01px;font-size:12px;line-height:24px;height:24px;color:#333;margin-left:-0.34px;z-index:1;">3</span>
<span class="t" id="t68" style="left:10.5px;top:338.01px;font-size:12px;line-height:24px;height:24px;color:#217346;margin-left:-0.34px;z-index:1;">4</span>
<span class="t" id="t69" style="left:10.5px;top:374.01px;font-size:12px;line-height:24px;height:24px;color:#333;margin-left:-0.34px;z-index:1;">5</span>
<span class="t" id="t70" style="left:10.5px;top:410.01px;font-size:12px;line-height:24px;height:24px;color:#333;margin-left:-0.34px;z-index:1;">6</span>
<span class="t" id="t71" style="left:10.5px;top:432.01px;font-size:12px;line-height:24px;height:24px;color:#333;margin-left:-0.34px;z-index:1;">7</span>
<span class="t" id="t72" style="left:10.5px;top:452.01px;font-size:12px;line-height:24px;height:24px;color:#333;margin-left:-0.34px;z-index:1;">8</span>
<span class="t" id="t73" style="left:10.5px;top:472.01px;font-size:12px;line-height:24px;height:24px;color:#333;margin-left:-0.34px;z-index:1;">9</span>
<span class="t" id="t74" style="left:6.28px;top:492.01px;font-size:12px;line-height:24px;height:24px;color:#333;transform:scaleX(1.0719);transform-origin:0 0;z-index:1;">10</span>
<div style="left:0;top:0;width:881px;height:520px;overflow:hidden"><span class="t" id="t75" style="left:6.28px;top:512.01px;font-size:12px;line-height:24px;height:24px;color:#333;transform:scaleX(1.1485);transform-origin:0 0;z-index:1;">11</span></div>
<span class="t" id="t76" style="left:173.3px;top:278.01px;font-size:24px;line-height:48px;height:48px;color:#000;transform:scaleX(0.8964);transform-origin:0 0;">ini CELL C3</span>
<span class="t" id="t77" style="left:174.5px;top:312.01px;font-size:31px;line-height:62px;height:62px;color:#0070c0;font-weight:700;transform:scaleX(0.9701);transform-origin:0 0;">Huruf A, B, C dst adalah Kolom</span>
<span class="t" id="t78" style="left:173.4px;top:358.01px;font-size:24px;line-height:48px;height:48px;color:#000;transform:scaleX(1.0004);transform-origin:0 0;">Angka 1, 2, 3, dst adalah Baris</span>
<span class="t" id="t79" style="left:112.25px;top:522.01px;font-size:12.5px;line-height:25.0px;height:25.0px;color:#217346;font-weight:700;transform:scaleX(1.0093);transform-origin:0 0;">Sheet1</span>
<span class="t" id="t80" style="left:8.84px;top:548.00px;font-size:11px;line-height:22px;height:22px;color:#444;transform:scaleX(0.9973);transform-origin:0 0;">Ready</span>
<span class="t" id="t81" style="left:107.54px;top:548.00px;font-size:11px;line-height:22px;height:22px;color:#444;transform:scaleX(1.0561);transform-origin:0 0;">Accessibility: Good to go</span>
<span class="t" id="t82" style="left:834.34px;top:548.00px;font-size:11px;line-height:22px;height:22px;color:#444;transform:scaleX(0.9492);transform-origin:0 0;">100%</span>
</div>
</body></html>
